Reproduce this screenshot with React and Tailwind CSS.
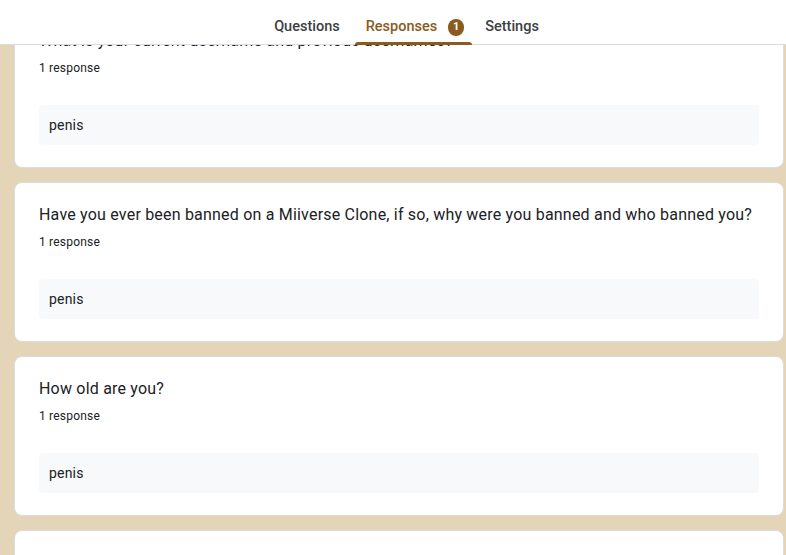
import React from "react";

const questions = [
  "What is your current username and previous usernames?",
  "Have you ever been banned on a Miiverse Clone, if so, why were you banned and who banned you?",
  "How old are you?",
  "Why do you want to join?",
];

function Card({ q }) {
  return (
    <div className="ml-[14px] w-[770px] rounded-lg border border-[#dadce0] bg-white pl-[24px] pr-[24px] pt-[20px] pb-[22px] tracking-[0.2px]">
      <div className="text-[16px] leading-[24px] text-[#202124]">{q}</div>
      <div className="mt-[7px] text-[12px] leading-[16px] text-[#202124]">1 response</div>
      <div className="mt-[29px] h-[40px] rounded bg-[#f8f9fa] pl-[10px] flex items-center text-[14px] text-[#202124]">
        penis
      </div>
    </div>
  );
}

export default function App() {
  return (
    <div className="relative h-[555px] w-[786px] overflow-hidden bg-[#e4d4b8]" style={{ fontFamily: "Roboto, 'Liberation Sans', sans-serif" }}>
      <div className="flex flex-col gap-[14px] pt-[8px]">
        {questions.map((q, i) => (
          <Card key={i} q={q} />
        ))}
      </div>
      <div className="absolute left-0 top-0 h-[45px] w-full border-b border-[#dadce0] bg-white">
        <div className="flex h-full justify-center pl-[27px]">
          <div className="flex h-full items-center pl-[12px] pr-[13px] pt-[10px] text-[14.5px] font-medium text-[#3c4043]">Questions</div>
          <div className="relative flex h-full items-center pl-[13px] pr-[9px] pt-[10px] text-[14.5px] font-medium text-[#8a5b1e]">
            <span>Responses</span>
            <span className="ml-[11px] flex h-[17px] w-[16px] items-center justify-center rounded-full bg-[#8a5b1e] text-[11px] font-bold text-white">1</span>
            <div className="absolute bottom-[-1px] left-[2px] right-[1px] h-[3px] rounded-t-[3px] bg-[#8a5b1e]"></div>
          </div>
          <div className="flex h-full items-center px-[12px] pt-[10px] text-[14.5px] font-medium text-[#3c4043]">Settings</div>
        </div>
      </div>
    </div>
  );
}
